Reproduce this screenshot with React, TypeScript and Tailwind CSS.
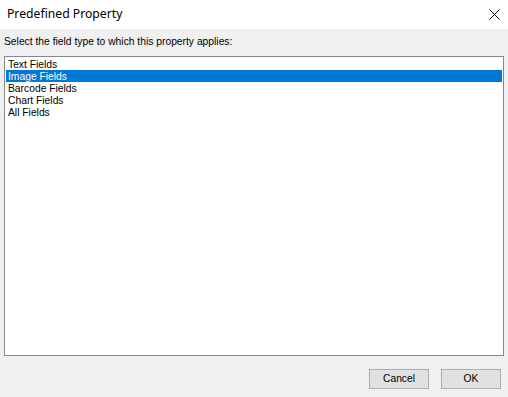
import { useState } from 'react';

const items = ['Text Fields', 'Image Fields', 'Barcode Fields', 'Chart Fields', 'All Fields'];

function App() {
  const [selected, setSelected] = useState(1);

  return (
    <div className="w-[508px] h-[397px] flex flex-col bg-[#f0f0f0] overflow-hidden">
      {/* title bar */}
      <div className="h-[29px] bg-white flex items-center justify-between pl-[7px] pr-[8px] shrink-0">
        <span className="text-[12.2px] text-black" style={{ fontFamily: '"Noto Sans", sans-serif' }}>
          Predefined Property
        </span>
        <svg width="11" height="11" viewBox="0 0 11 11">
          <path d="M0.5 0.5 L10.5 10.5 M10.5 0.5 L0.5 10.5" stroke="#000" strokeWidth="1" fill="none" />
        </svg>
      </div>

      <div className="flex flex-col flex-1 px-[4px] pt-[6px]" style={{ fontFamily: '"Liberation Sans", Arial, sans-serif' }}>
        <div className="text-[10.3px] text-black h-[13px] leading-[13px] mb-[8px]">
          Select the field type to which this property applies:
        </div>

        <div className="h-[300px] w-[500px] border border-[#828790] bg-white px-[1px] pt-[1px]">
          {items.map((it, i) => (
            <div
              key={it}
              onClick={() => setSelected(i)}
              className={`h-[12px] leading-[14px] text-[10.3px] pl-[2px] ${
                i === selected ? 'bg-[#0078d7] text-white' : 'text-black'
              }`}
            >
              {it}
            </div>
          ))}
        </div>

        <div className="flex justify-end gap-[12px] mt-[13px] pr-[3px]">
          <button className="w-[60px] h-[20px] border border-[#adadad] bg-[#e1e1e1] text-[10.3px] text-black">
            Cancel
          </button>
          <button className="w-[60px] h-[20px] border border-[#adadad] bg-[#e1e1e1] text-[10.3px] text-black">
            OK
          </button>
        </div>
      </div>
    </div>
  );
}

export default App;
